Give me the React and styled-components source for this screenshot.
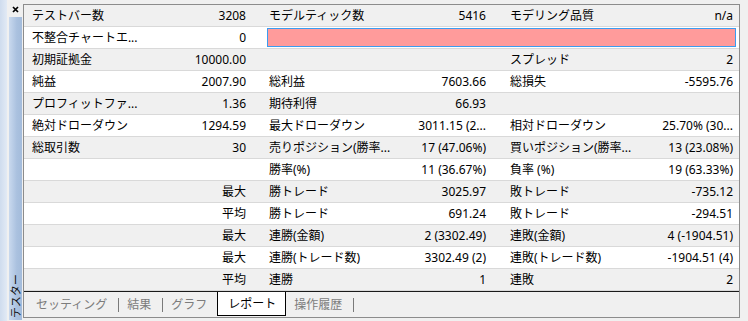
import React from "react";
import styled, { createGlobalStyle } from "styled-components";

const Global = createGlobalStyle`
  html, body, #root { margin: 0; padding: 0; height: 100%; }
  body {
    background: #f0f0f0;
    font-family: "Noto Sans", "Noto Sans CJK JP", sans-serif;
    font-size: 12px;
    color: #000;
    overflow: hidden;
  }
`;

const Frame = styled.div`
  display: flex;
  width: 748px;
  height: 321px;
  background: #f0f0f0;
`;

const LeftStrip = styled.div`
  display: flex;
  width: 23px;
  height: 321px;
`;

const Edge = styled.div`
  width: 7px;
  background: linear-gradient(to right, #cfdcee, #e2eaf5);
`;

const Side = styled.div`
  width: 16px;
  display: flex;
  flex-direction: column;
`;

const CloseArea = styled.div`
  height: 17px;
  box-sizing: border-box;
  padding: 6px 0 0 5px;
  display: flex;
  align-items: flex-start;
`;

const VTab = styled.div`
  flex: 1;
  margin: 0 1px 1px 2px;
  background: linear-gradient(to right, #c9d9ee, #aac1df 60%, #a4bcdb);
  display: flex;
  flex-direction: column;
  justify-content: flex-end;
  align-items: center;
  padding-bottom: 2px;
`;

const VText = styled.span`
  writing-mode: vertical-rl;
  text-orientation: sideways;
  transform: rotate(180deg);
  font-size: 11px;
  line-height: 11px;
  color: #111;
  font-family: "Noto Sans CJK JP", sans-serif;
`;

const Panel = styled.div`
  margin-top: 4px;
  width: 715px;
  height: 312px;
  border: 1px solid #8c8c8c;
  display: flex;
  flex-direction: column;
  background: #f0f0f0;
`;

const cols = "126px 114px 136px 104px 136px 99px";

const Row = styled.div`
  display: grid;
  grid-template-columns: ${cols};
  height: 21px;
  border-bottom: 1px solid #d9d9d9;
  background: ${(p) => (p.$alt ? "#f0f0f0" : "#ffffff")};
`;

const Label = styled.div`
  padding-left: ${(p) => p.$pl}px;
  line-height: 21px;
  white-space: nowrap;
  overflow: hidden;
`;

const Value = styled.div`
  padding-right: ${(p) => p.$pr}px;
  line-height: 21px;
  text-align: right;
  white-space: nowrap;
  overflow: hidden;
`;

const Pink = styled.div`
  grid-column: 3 / 7;
  margin: 1px 3px 1px 3px;
  background: #ff9b9b;
  border: 1px solid #3b9cf0;
`;

const TabBar = styled.div`
  display: flex;
  align-items: stretch;
  height: 24px;
  border-top: 1px solid #1a1a1a;
  padding-left: 4px;
  background: #f0f0f0;
`;

const Tab = styled.div`
  display: flex;
  align-items: center;
  padding: 0 11px 0 8px;
  color: #7c7c7c;
  font-size: 12px;
`;

const ActiveTab = styled.div`
  display: flex;
  align-items: center;
  padding: 0 9px 1px 10px;
  color: #000;
  background: #fff;
  border: 1px solid #000;
  border-top: none;
  margin-left: -1px;
  font-size: 12px;
`;

const Sep = styled.div`
  width: 1px;
  height: 14px;
  align-self: center;
  margin-top: 1px;
  background: #7a7a7a;
`;

const RightGap = styled.div`
  width: 8px;
`;

const rows = [
  ["テストバー数", "3208", "モデルティック数", "5416", "モデリング品質", "n/a"],
  ["不整合チャートエ...", "0", null],
  ["初期証拠金", "10000.00", "", "", "スプレッド", "2"],
  ["純益", "2007.90", "総利益", "7603.66", "総損失", "-5595.76"],
  ["プロフィットファ...", "1.36", "期待利得", "66.93", "", ""],
  ["絶対ドローダウン", "1294.59", "最大ドローダウン", "3011.15 (2...", "相対ドローダウン", "25.70% (30..."],
  ["総取引数", "30", "売りポジション(勝率...", "17 (47.06%)", "買いポジション(勝率...", "13 (23.08%)"],
  ["", "", "勝率(%)", "11 (36.67%)", "負率 (%)", "19 (63.33%)"],
  ["", "最大", "勝トレード", "3025.97", "敗トレード", "-735.12"],
  ["", "平均", "勝トレード", "691.24", "敗トレード", "-294.51"],
  ["", "最大", "連勝(金額)", "2 (3302.49)", "連敗(金額)", "4 (-1904.51)"],
  ["", "最大", "連勝(トレード数)", "3302.49 (2)", "連敗(トレード数)", "-1904.51 (4)"],
  ["", "平均", "連勝", "1", "連敗", "2"],
];

const CloseIcon = () => (
  <svg width="7" height="7" viewBox="0 0 7 7">
    <path d="M1 1 L6 6 M6 1 L1 6" stroke="#000" strokeWidth="1.7" />
  </svg>
);

export default function App() {
  return (
    <>
      <Global />
      <Frame>
        <LeftStrip>
          <Edge />
          <Side>
            <CloseArea>
              <CloseIcon />
            </CloseArea>
            <VTab>
              <VText>テスター</VText>
            </VTab>
          </Side>
        </LeftStrip>
        <Panel>
          {rows.map((r, i) => (
            <Row key={i} $alt={i % 2 === 0}>
              <Label $pl={8}>{r[0]}</Label>
              <Value $pr={18}>{r[1]}</Value>
              {r[2] === null ? (
                <Pink />
              ) : (
                <>
                  <Label $pl={5}>{r[2]}</Label>
                  <Value $pr={18}>{r[3]}</Value>
                  <Label $pl={6}>{r[4]}</Label>
                  <Value $pr={6}>{r[5]}</Value>
                </>
              )}
            </Row>
          ))}
          <TabBar>
            <Tab>セッティング</Tab>
            <Sep />
            <Tab>結果</Tab>
            <Sep />
            <Tab>グラフ</Tab>
            <ActiveTab>レポート</ActiveTab>
            <Tab>操作履歴</Tab>
            <Sep />
          </TabBar>
        </Panel>
        <RightGap />
      </Frame>
    </>
  );
}
